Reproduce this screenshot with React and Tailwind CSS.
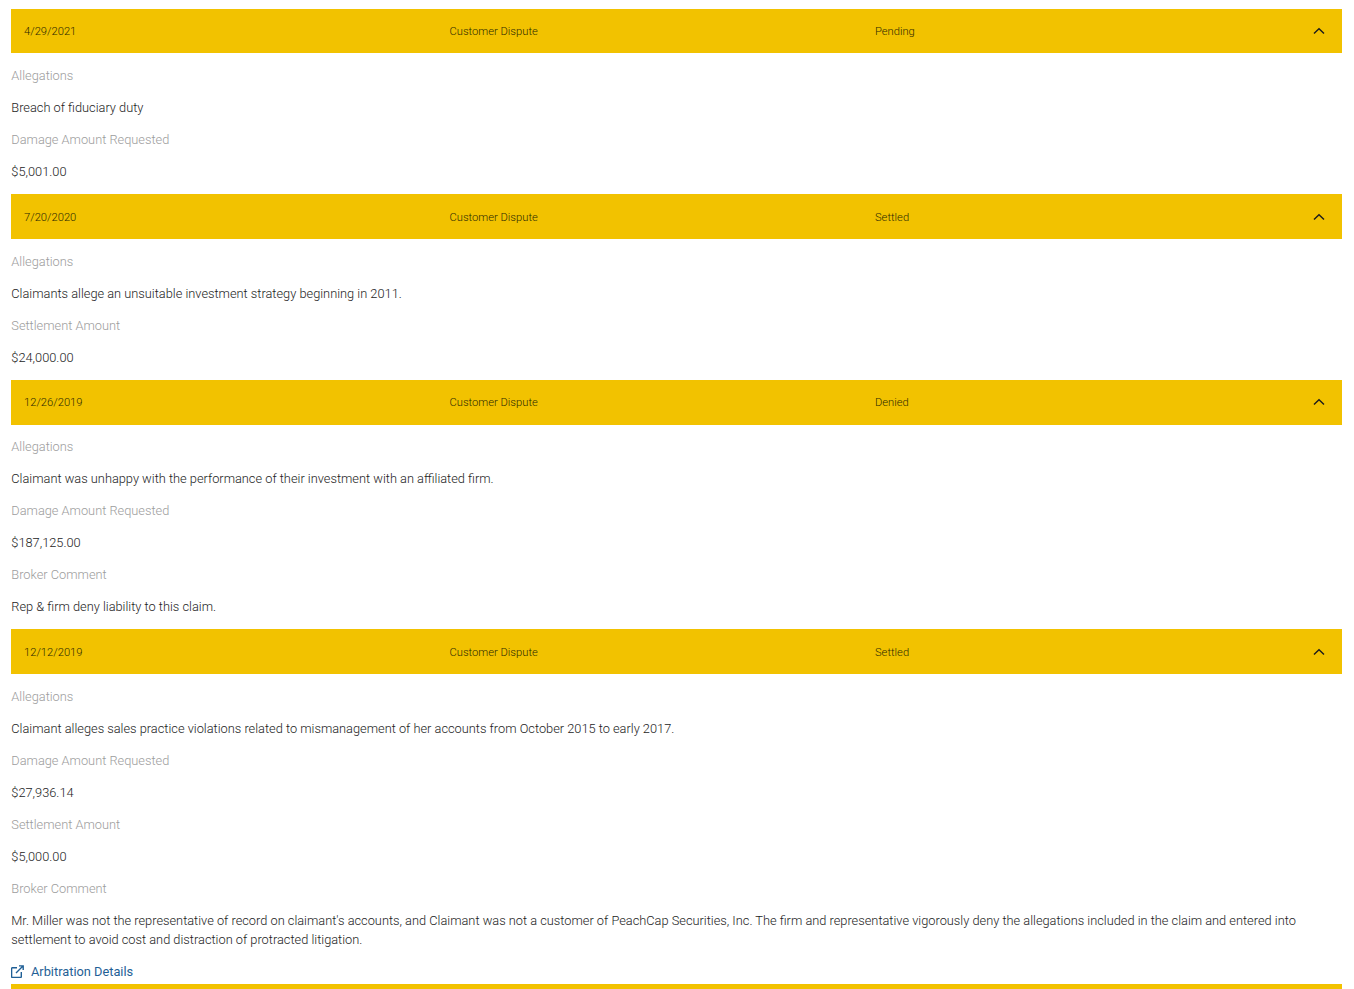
import React from "react";

const disputes = [
  {
    date: "4/29/2021",
    status: "Pending",
    fields: [
      ["Allegations", "Breach of fiduciary duty"],
      ["Damage Amount Requested", "$5,001.00"],
    ],
  },
  {
    date: "7/20/2020",
    status: "Settled",
    fields: [
      ["Allegations", "Claimants allege an unsuitable investment strategy beginning in 2011."],
      ["Settlement Amount", "$24,000.00"],
    ],
  },
  {
    date: "12/26/2019",
    status: "Denied",
    fields: [
      ["Allegations", "Claimant was unhappy with the performance of their investment with an affiliated firm."],
      ["Damage Amount Requested", "$187,125.00"],
      ["Broker Comment", "Rep & firm deny liability to this claim."],
    ],
  },
  {
    date: "12/12/2019",
    status: "Settled",
    link: true,
    fields: [
      ["Allegations", "Claimant alleges sales practice violations related to mismanagement of her accounts from October 2015 to early 2017."],
      ["Damage Amount Requested", "$27,936.14"],
      ["Settlement Amount", "$5,000.00"],
      [
        "Broker Comment",
        "Mr. Miller was not the representative of record on claimant's accounts, and Claimant was not a customer of PeachCap Securities, Inc. The firm and representative vigorously deny the allegations included in the claim and entered into settlement to avoid cost and distraction of protracted litigation.",
      ],
    ],
  },
];

function Header({ date, status }) {
  return (
    <div className="h-[44.8px] bg-[#f2c200] flex items-center pl-[12.7px] pt-[1.5px] text-[11.2px] text-[#2e2a03]">
      <div className="w-[425.5px]">{date}</div>
      <div className="w-[425.5px]">Customer Dispute</div>
      <div className="flex-1">{status}</div>
      <svg className="mr-[17px] -mt-[1.5px] w-3 h-3 text-[#1c1c1c]" viewBox="0 0 12 12" fill="none" stroke="currentColor" strokeWidth="1.4">
        <path d="M1 8.5 6 3.7l5 4.8" />
      </svg>
    </div>
  );
}

function Dispute({ item }) {
  return (
    <div>
      <Header date={item.date} status={item.status} />
      <div className="pt-[12.8px]">
        {item.fields.map(([label, value]) => (
          <div key={label}>
            <p className="mb-[12.8px] text-[#9c9c9c]">{label}</p>
            <p className="mb-[12.8px] text-[#1c1c1c]">{value}</p>
          </div>
        ))}
        {item.link && (
          <a className="flex items-center gap-[6.7px] h-[19.2px] text-[#1f5f96] font-normal">
            <svg className="w-[13px] h-[13px] -mt-px" viewBox="0 0 13 13" fill="none" stroke="currentColor" strokeWidth="1.4">
              <path d="M6 2.7H1.2a.6.6 0 0 0-.6.6v8.5a.6.6 0 0 0 .6.6h8.5a.6.6 0 0 0 .6-.6V7" />
              <path d="M5 8 12 1M8 .9h4.2v4.2" />
            </svg>
            Arbitration Details
          </a>
        )}
      </div>
    </div>
  );
}

export default function App() {
  return (
    <div className="h-screen overflow-hidden bg-white pt-[8.6px] pl-[11.3px] pr-3 font-['Roboto',sans-serif] text-[12.8px] leading-[19.2px] font-light">
      {disputes.map((item) => (
        <Dispute key={item.date} item={item} />
      ))}
      <div className="mt-[2.4px] h-[5px] bg-[#f2c200]" />
    </div>
  );
}
